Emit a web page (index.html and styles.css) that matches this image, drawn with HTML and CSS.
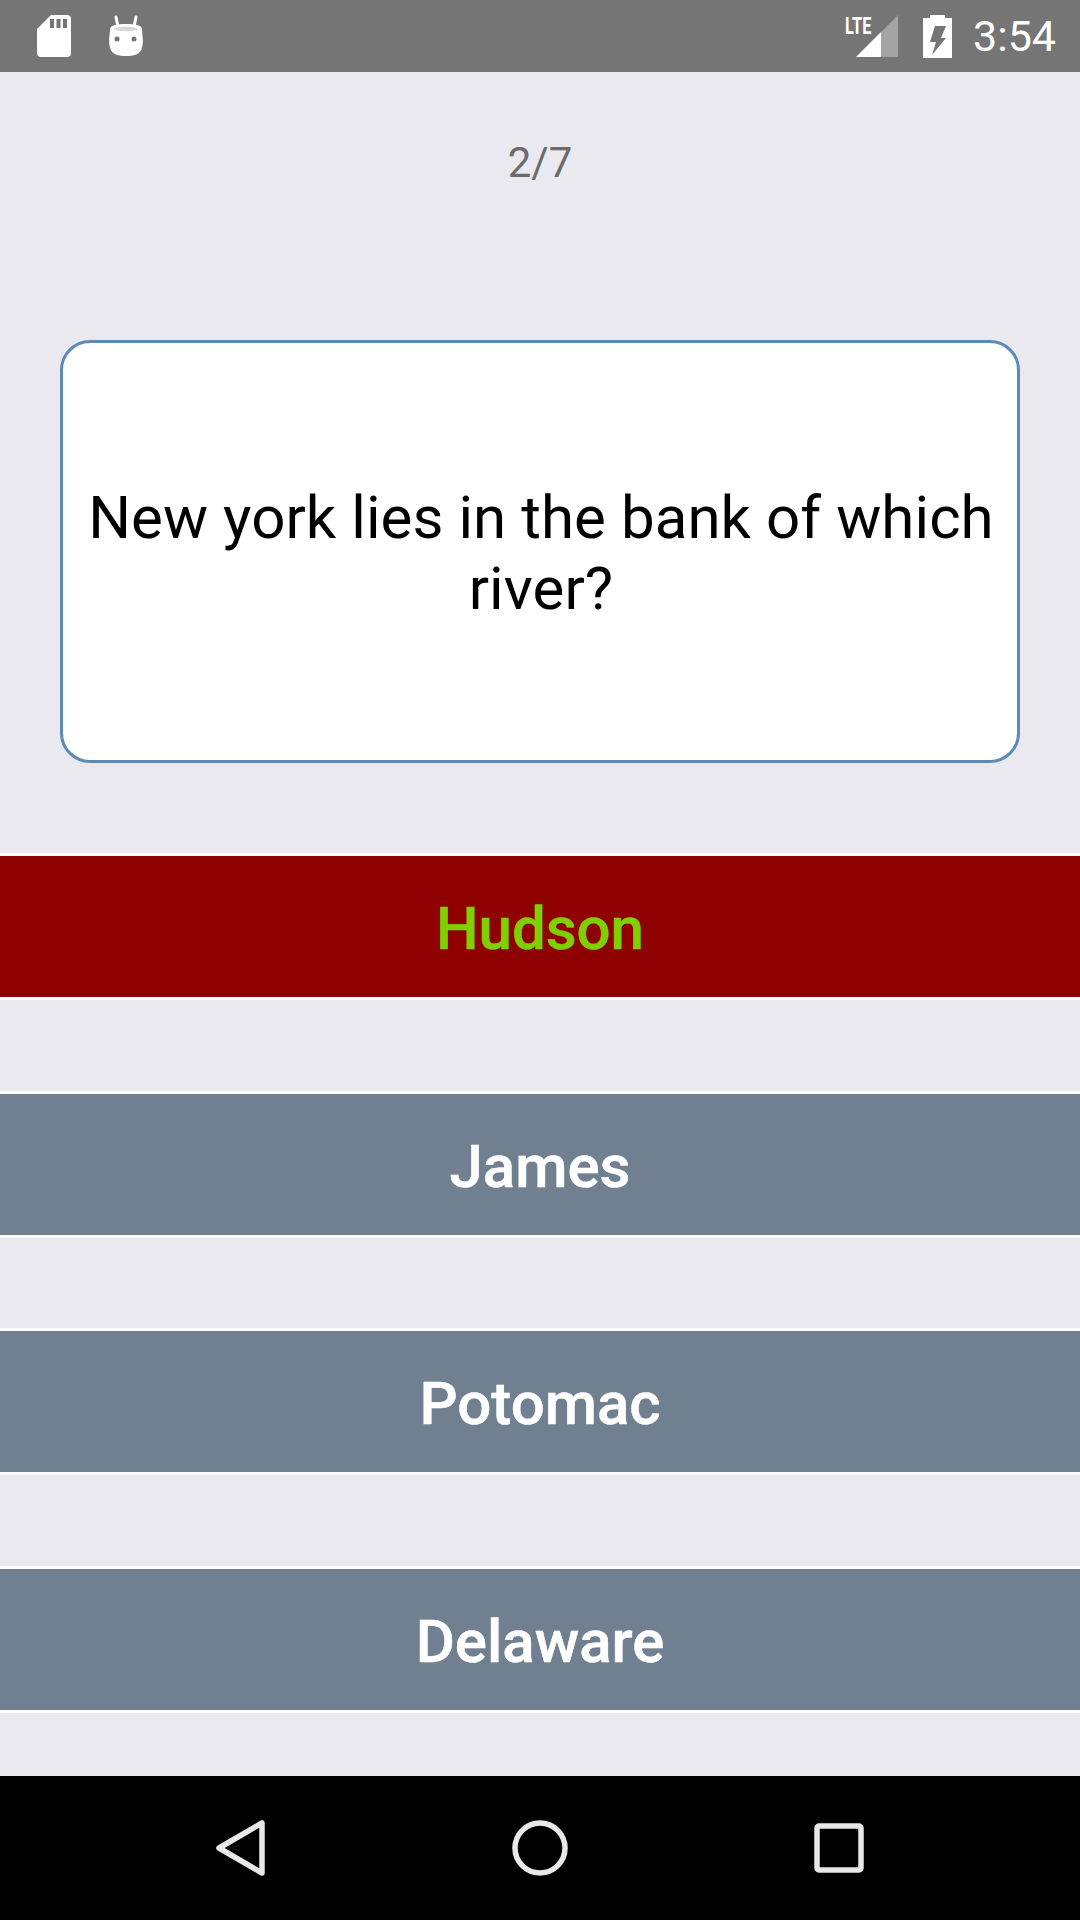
FILE: index.html
```html
<!DOCTYPE html>
<html>
<head>
<title>Quiz</title>
<link rel="stylesheet" href="styles.css">
</head>
<body>

<div class="statusbar">
  <div class="status-left">
    <svg width="34" height="42" viewBox="0 0 34 42">
      <path fill="#fff" d="M14 0H30Q34 0 34 4V38Q34 42 30 42H4Q0 42 0 38V14Z"/>
      <path fill="#757575" d="M13 4h4v9h-4zM19.500 4h4v9h-4zM26 4h4v9h-4z"/>
    </svg>
    <svg width="36" height="42" viewBox="0 0 36 42">
      <path stroke="#fff" stroke-width="3" stroke-linecap="round" d="M8 2l2 10M28 2l-2 10"/>
      <path fill="#fff" d="M18 9C26 9 34 10 34 14C34 20 36 26 34 32C33 40 25 41 18 41C11 41 3 40 2 32C0 26 2 20 2 14C2 10 10 9 18 9Z"/>
      <path fill="#d8d8d8" d="M6 14C9 11 27 11 30 14C27 17 9 17 6 14Z"/>
      <circle cx="9" cy="24" r="2.500" fill="#757575"/>
      <circle cx="26" cy="24" r="2.500" fill="#757575"/>
    </svg>
  </div>
  <div class="status-right">
    <div class="signal">
      <span class="lte">LTE</span>
      <svg width="42" height="42" viewBox="0 0 42 42">
        <path fill="#a3a3a3" d="M42 0V42H25V17Z"/>
        <path fill="#fff" d="M25 17V42H0Z"/>
      </svg>
    </div>
    <svg class="battery" width="29" height="43" viewBox="0 0 29 43">
      <path fill="#fff" d="M7 0H22V3H29V43H0V3H7Z"/>
      <path fill="#757575" d="M12 11H23L18 23H23L9 40L13 27H7Z"/>
    </svg>
    <span class="clock">3:54</span>
  </div>
</div>

<div class="content">
  <div class="counter">2/7</div>

  <div class="question">New york lies in the bank of which river?</div>

  <div class="answers">
    <div class="answer wrong">Hudson</div>
    <div class="answer">James</div>
    <div class="answer">Potomac</div>
    <div class="answer">Delaware</div>
  </div>
</div>

<div class="navbar">
  <svg width="50" height="56" viewBox="0 0 50 56">
    <path fill="none" stroke="#e8e8e8" stroke-width="5.500" stroke-linejoin="round" d="M46 3V53L3 28Z"/>
  </svg>
  <svg width="56" height="56" viewBox="0 0 56 56">
    <circle cx="28" cy="28" r="25" fill="none" stroke="#e8e8e8" stroke-width="5.500"/>
  </svg>
  <svg width="50" height="50" viewBox="0 0 50 50">
    <rect x="3" y="3" width="44" height="44" rx="2" fill="none" stroke="#e8e8e8" stroke-width="5.500"/>
  </svg>
</div>

</body>
</html>
```

FILE: styles.css
```css
* {
  box-sizing: border-box;
}

body {
  margin: 0;
  width: 1080px;
  height: 1920px;
  display: flex;
  flex-direction: column;
  background-color: #e9e9ef;
  font-family: Roboto, sans-serif;
  overflow: hidden;
}

.statusbar {
  height: 72px;
  background-color: #757575;
  display: flex;
  justify-content: space-between;
  align-items: center;
  padding: 0 24px 0 37px;
}

.status-left {
  display: flex;
  align-items: center;
  gap: 37px;
}

.status-right {
  display: flex;
  align-items: center;
}

.signal {
  position: relative;
  width: 53px;
  height: 42px;
  display: flex;
  justify-content: flex-end;
}

.lte {
  position: absolute;
  left: 0;
  top: -3px;
  font-size: 24px;
  font-weight: 700;
  color: #fff;
  transform: scaleX(0.68);
  transform-origin: left top;
}

.battery {
  margin-left: 25px;
}

.clock {
  margin-left: 21px;
  font-size: 43px;
  color: #fff;
}

.content {
  flex: 1;
  display: flex;
  flex-direction: column;
}

.counter {
  margin-top: 66px;
  height: 50px;
  line-height: 50px;
  text-align: center;
  font-size: 42px;
  color: #6b6b6b;
}

.question {
  margin: 152px 60px 0;
  height: 423px;
  padding: 2px 18px 0 20px;
  display: flex;
  align-items: center;
  justify-content: center;
  text-align: center;
  font-size: 60px;
  letter-spacing: 0.070px;
  line-height: 71px;
  color: #000;
  background-color: #fff;
  border: 3px solid #5b8ab5;
  border-radius: 30px;
}

.answers {
  margin-top: 90px;
  display: flex;
  flex-direction: column;
  gap: 90.670px;
}

.answer {
  height: 147px;
  padding-top: 4px;
  line-height: 137px;
  text-align: center;
  font-size: 60px;
  font-weight: 500;
  -webkit-text-stroke: 0.500px;
  color: #fff;
  background-color: #708090;
  border-top: 3px solid #fff;
  border-bottom: 3px solid #fff;
}

.wrong {
  color: #7fd000;
  background-color: #8f0000;
}

.navbar {
  height: 144px;
  background-color: #000;
  display: flex;
  align-items: center;
  padding: 0 0 0 216px;
  gap: 246px;
}
```
